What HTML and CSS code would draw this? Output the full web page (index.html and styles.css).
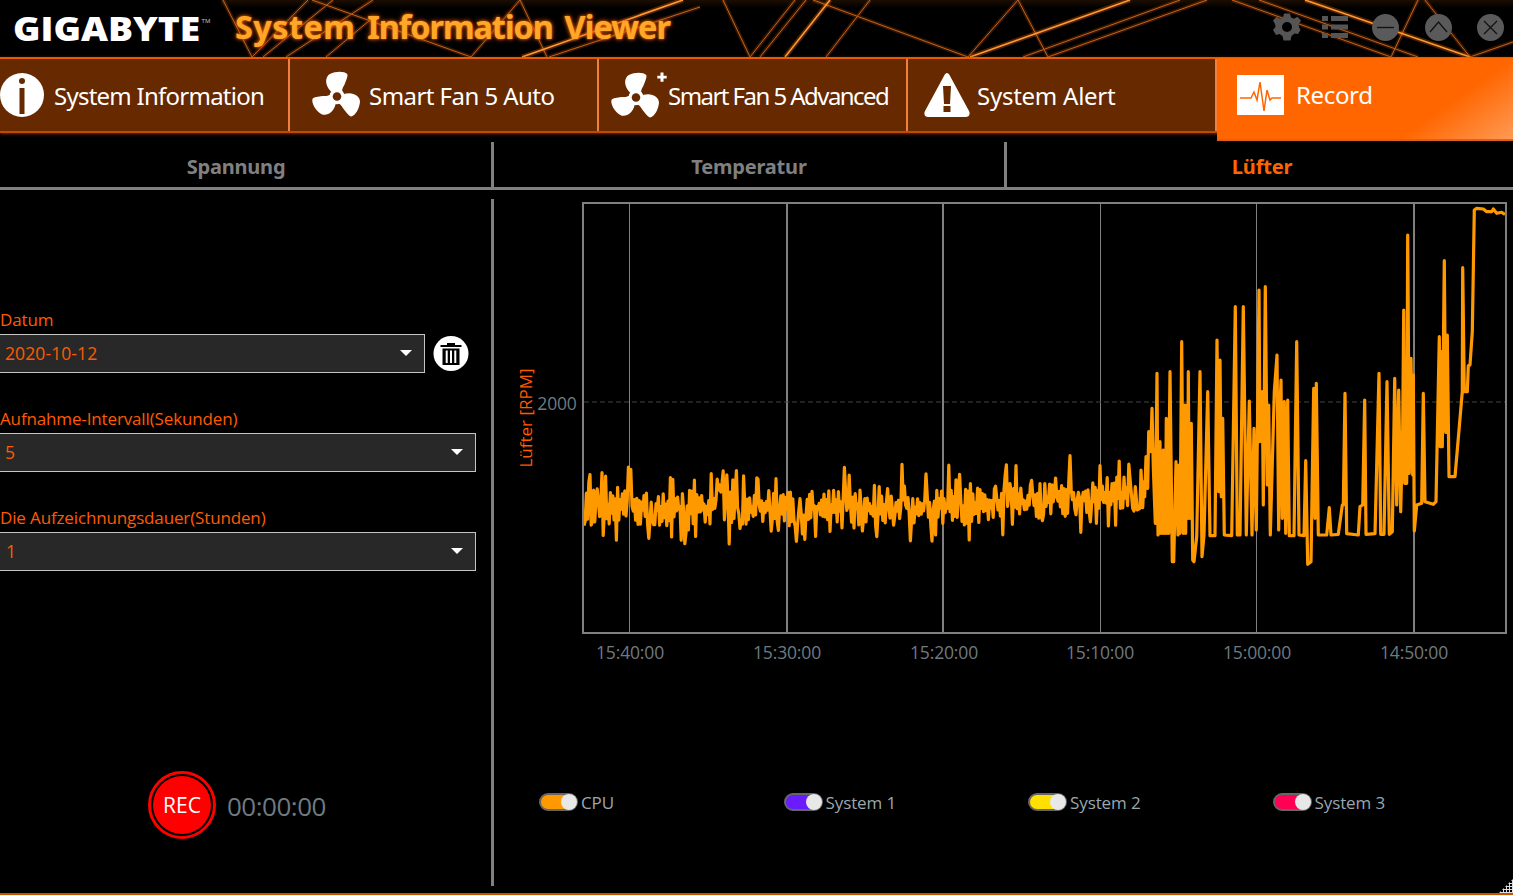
FILE: index.html
```html
<!DOCTYPE html>
<html lang="de">
<head>
<meta charset="utf-8">
<title>GIGABYTE System Information Viewer</title>
<link rel="stylesheet" href="styles.css">
</head>
<body>
<svg class="defs" width="0" height="0" aria-hidden="true">
  <defs>
    <g id="fan" transform="translate(0 .5) scale(1.02)">
      <path id="blade" d="M-6,-5 C-12,-11 -12,-19 -7,-22 C-1,-25 7,-25 10,-22 C11,-20 9,-16 7.500,-12 C6,-9 5,-8 5,-5 Z"/>
      <use href="#blade" transform="rotate(120)"/>
      <use href="#blade" transform="rotate(240)"/>
      <circle r="7.5"/>
      <circle r="4.2" fill="#662900"/>
    </g>
  </defs>
</svg>
<div class="app">
  <header class="titlebar">
    <svg class="pattern" width="1513" height="57" viewBox="0 0 1513 57" aria-hidden="true">
      <g class="glow">
        <path d="M223 0L252 57L308 0M263 57L333 0M286 57L373 0M326 57L370 20M312 0L471 57L520 0L547 57M549 57L700 7M723 0L750 57L795 0M760 57L806 0M826 57L870 0M813 0L968 57L1018 0L1048 57M1023 57L1180 0M1048 57L1207 0M1232 0L1391 57L1418 0M1259 0L1418 57M1425 0L1470 57L1513 42"/>
        <path class="bright" d="M522 57L683 0M640 15L683 0M785 57L830 0M970 57L1130 0M1305 0L1470 57"/>
      </g>
      <g class="line">
        <path d="M223 0L252 57L308 0M263 57L333 0M286 57L373 0M326 57L370 20M312 0L471 57L520 0L547 57M549 57L700 7M723 0L750 57L795 0M760 57L806 0M826 57L870 0M813 0L968 57L1018 0L1048 57M1023 57L1180 0M1048 57L1207 0M1232 0L1391 57L1418 0M1259 0L1418 57M1425 0L1470 57L1513 42"/>
        <path class="bright" d="M522 57L683 0M640 15L683 0M785 57L830 0M970 57L1130 0M1305 0L1470 57"/>
      </g>
    </svg>
    <div class="brand"><span class="logo">GIGABYTE</span><span class="tm">TM</span></div>
    <h1 class="title">System <span class="w-info">Information</span> <span class="w-view">Viewer</span></h1>
    <div class="winctl">
      <svg class="ctl-gear" width="28" height="28" viewBox="-14 -14 28 28" aria-hidden="true">
        <path d="M-3-13.5H3L4-9.5 7-8.2 10.5-10.3 14-6.2 11.5-3 12-0 13.5 3 11 7 7.5 6.5 4.5 9 3.5 13.5H-3.5L-4.5 9-7.5 7-11 8-14 3-11.5 0-12-3-14-6.5-10.5-10.3-7-8.2-4-9.5Z"/>
        <circle r="5" fill="#000"/>
      </svg>
      <svg class="ctl-list" width="26" height="24" viewBox="0 0 26 24" aria-hidden="true">
        <rect x="0" y="1" width="6" height="5"/><rect x="9" y="1" width="17" height="5"/>
        <rect x="0" y="9.5" width="6" height="5"/><rect x="9" y="9.5" width="17" height="5"/>
        <rect x="0" y="18" width="6" height="5"/><rect x="9" y="18" width="17" height="5"/>
      </svg>
      <svg class="ctl-round" width="27" height="27" viewBox="0 0 27 27" aria-hidden="true"><circle cx="13.5" cy="13.5" r="13.5"/><path d="M5 13.5H22"/></svg>
      <svg class="ctl-round" width="27" height="27" viewBox="0 0 27 27" aria-hidden="true"><circle cx="13.5" cy="13.5" r="13.5"/><path d="M5 18L13.5 8L22 18"/></svg>
      <svg class="ctl-round" width="27" height="27" viewBox="0 0 27 27" aria-hidden="true"><circle cx="13.5" cy="13.5" r="13.5"/><path d="M7 7L20 20M20 7L7 20"/></svg>
    </div>
  </header>

  <nav class="mainnav">
    <a class="navtab navtab-info">
      <svg class="nav-icon" width="44" height="44" viewBox="0 0 44 44" aria-hidden="true">
        <circle class="w" cx="22" cy="22" r="22"/><circle class="b" cx="22" cy="8" r="3"/><rect class="b" x="19.5" y="15" width="5" height="26"/>
      </svg>
      <span>System Information</span>
    </a>
    <a class="navtab navtab-auto">
      <svg class="nav-icon" width="48" height="48" viewBox="-24 -25 48 48" aria-hidden="true"><use class="w" href="#fan"/></svg>
      <span>Smart Fan 5 Auto</span>
    </a>
    <a class="navtab navtab-adv">
      <svg class="nav-icon" width="54" height="50" viewBox="-24 -27 54 50" aria-hidden="true">
        <use class="w" href="#fan"/><path class="w" d="M24.5-24.500h3v3.200h3.200v2.800h-3.200v3.200h-3v-3.200h-3.200v-2.800h3.200Z"/>
      </svg>
      <span>Smart Fan 5 Advanced</span>
    </a>
    <a class="navtab navtab-alert">
      <svg class="nav-icon" width="46" height="44" viewBox="0 0 46 44" aria-hidden="true">
        <path class="w" d="M23 0C24 0 25 1 25.500 2L45 38C46.500 41 45 44 42 44H4C1 44 -.5 41 1 38L20.500 2C21 1 22 0 23 0Z"/>
        <path class="b" d="M19 13H27L26 31H20ZM19.500 33H26.500V39H19.500Z"/>
      </svg>
      <span>System Alert</span>
    </a>
    <a class="navtab navtab-rec">
      <svg class="nav-icon" width="47" height="40" viewBox="0 0 47 40" aria-hidden="true">
        <rect class="w" width="47" height="40"/>
        <path class="pulse" d="M3 23H14L17 17L20 25L23 7L27 36L30 15L33 25L35 23H44"/>
      </svg>
      <span>Record</span>
    </a>
  </nav>

  <div class="subtabs">
    <div class="subtab subtab-first">Spannung</div>
    <div class="subtab">Temperatur</div>
    <div class="subtab subtab-on">Lüfter</div>
  </div>

  <main class="content">
    <section class="settings">
      <div class="field">
        <label class="field-label">Datum</label>
        <div class="field-row">
          <div class="select select-short"><span>2020-10-12</span><i class="caret"></i></div>
          <svg class="trash" width="36" height="36" viewBox="0 0.5 36 36" aria-hidden="true">
            <circle cx="18" cy="18" r="17.500"/>
            <path class="trash-k" d="M7.500 9.500H28.500V11.500H7.500ZM14 7.500H22V9.500H14ZM9.500 13H26.500V29.500H9.500Z"/>
            <path class="trash-w" d="M12.700 15V27.500H14.700V15ZM17 15V27.500H19V15ZM21.300 15V27.500H23.300V15Z"/>
          </svg>
        </div>
      </div>
      <div class="field">
        <label class="field-label">Aufnahme-Intervall(Sekunden)</label>
        <div class="select"><span>5</span><i class="caret"></i></div>
      </div>
      <div class="field">
        <label class="field-label">Die Aufzeichnungsdauer(Stunden)</label>
        <div class="select"><span class="val-one">1</span><i class="caret"></i></div>
      </div>
      <div class="recorder">
        <div class="rec-btn"><span>REC</span></div>
        <div class="rec-time">00:00:00</div>
      </div>
    </section>

    <section class="chart-pane">
      <svg class="chart" id="chart" width="1019" height="480" viewBox="494 190 1019 480" role="img" aria-label="Lüfter RPM">
        <path class="grid grid-thin" d="M629.500 203V633M1100.500 203V633M1256.500 203V633"/>
        <path class="grid grid-thick" d="M787 203V633M943 203V633M1414 203V633"/>
        <path class="dash" d="M584 402H1505"/>
        <polyline class="series" id="series" points=""/>
        <rect class="frame" x="583" y="203" width="923" height="430"/>
        <text class="tick" x="557" y="410" text-anchor="middle">2000</text>
        <text class="axis" transform="translate(532 418) rotate(-90)" text-anchor="middle">Lüfter [RPM]</text>
        <text class="tick" x="630" y="659" text-anchor="middle">15:40:00</text>
        <text class="tick" x="787" y="659" text-anchor="middle">15:30:00</text>
        <text class="tick" x="944" y="659" text-anchor="middle">15:20:00</text>
        <text class="tick" x="1100" y="659" text-anchor="middle">15:10:00</text>
        <text class="tick" x="1257" y="659" text-anchor="middle">15:00:00</text>
        <text class="tick" x="1414" y="659" text-anchor="middle">14:50:00</text>
      </svg>
      <div class="legend">
        <div class="legend-item"><span class="toggle t-cpu"></span><span>CPU</span></div>
        <div class="legend-item"><span class="toggle t-s1"></span><span>System 1</span></div>
        <div class="legend-item"><span class="toggle t-s2"></span><span>System 2</span></div>
        <div class="legend-item"><span class="toggle t-s3"></span><span>System 3</span></div>
      </div>
    </section>
  </main>

  <div class="grip" aria-hidden="true"></div>
</div>
<script src="chart.js"></script>
</body>
</html>
```

FILE: styles.css
```css
* { box-sizing: border-box; }
html, body { margin: 0; padding: 0; background: #000; }
body { width: 1513px; height: 895px; overflow: hidden; font-family: "Open Sans", "Liberation Sans", sans-serif; }
.defs { position: absolute; }
.app { position: relative; width: 1513px; height: 895px; background: #000; border-bottom: 2px solid #c85000; overflow: hidden; display: flex; flex-direction: column; }

/* title bar */
.titlebar { position: relative; height: 57px; flex: none; display: flex; align-items: center; background: linear-gradient(#1c0e00, #000 8px); }
.pattern { position: absolute; left: 0; top: 0; }
.glow path { fill: none; stroke: #ff6a00; stroke-width: 4; opacity: .2; }
.line path { fill: none; stroke: #c8641a; stroke-width: 1; }
.line .bright { stroke: #ff9a30; stroke-width: 1.6; }
.glow .bright { stroke-width: 5; opacity: .3; }
.brand { position: relative; width: 221px; height: 57px; flex: none; background: #000; display: flex; align-items: center; padding-left: 13px; }
.logo { display: block; font-family: "Open Sans", sans-serif; font-weight: 800; font-size: 33.500px; line-height: 57px; color: #fff; transform: scaleX(1.11); transform-origin: 0 50%; }
.tm { font-size: 6px; color: #ccc; align-self: flex-start; margin-top: 17px; margin-left: 20px; }
.title { position: relative; margin: 0 0 0 14px; padding-bottom: 4px; font-family: "Noto Sans", sans-serif; font-weight: 700; font-size: 32.500px; letter-spacing: .4px; line-height: 53px; color: #ffa726; text-shadow: 0 0 5px #e85c00, 0 0 2px #e85c00; white-space: nowrap; word-spacing: 3px; }
.w-info { letter-spacing: -1.100px; }
.w-view { letter-spacing: -1px; }
.winctl { position: absolute; left: 1273px; top: 13px; display: flex; align-items: center; }
.ctl-gear { fill: #555; margin-right: 21px; }
.ctl-list { fill: #555; margin-right: 24px; }
.ctl-round { margin-right: 25.500px; }
.ctl-round circle { fill: #5a5a5a; }
.ctl-round path { fill: none; stroke: #111; stroke-width: 1.300; }

/* main nav */
.mainnav { position: relative; height: 76px; flex: none; display: flex; background: #662900; border-top: 2px solid #e85c00; border-bottom: 2px solid #c04a00; box-shadow: 0 1px 3px #7a2c00; }
.navtab { height: 72px; display: flex; align-items: center; color: #fff; font-family: "Noto Sans", sans-serif; font-size: 24px; letter-spacing: -.25px; white-space: nowrap; border-right: 2px solid #f08040; }
.navtab .w { fill: #fff; }
.navtab .b { fill: #662900; }
.nav-icon { flex: none; overflow: visible; }
.navtab-info { width: 290px; gap: 10px; letter-spacing: -.75px; }
.navtab-auto { width: 309px; padding-left: 23px; gap: 8px; letter-spacing: -.55px; }
.navtab-adv { width: 309px; padding-left: 13px; gap: 2px; letter-spacing: -1.550px; }
.navtab-alert { width: 309px; padding-left: 16px; gap: 7px; }
.navtab-rec { flex: 1; margin-bottom: -8px; height: 83px; margin-top: -1px; padding: 0 0 8px 20px; gap: 12px; border-right: 0; background: linear-gradient(145deg, #ff6600 72%, #ff9a55 100%); border-bottom: 2px solid #e06020; letter-spacing: -.35px; }
.pulse { fill: none; stroke: #ff6600; stroke-width: 1.500; }

/* sub tabs */
.subtabs { display: grid; grid-template-columns: 494px 513px 1fr; height: 57px; padding-top: 9px; flex: none; border-bottom: 3px solid #808080; }
.subtab { display: flex; align-items: center; justify-content: center; padding-top: 4px; font-family: "Noto Sans", sans-serif; font-weight: 700; font-size: 20px; letter-spacing: -.2px; color: #808080; border-right: 3px solid #808080; }
.subtab-first { padding-right: 19px; }
.subtab-on { color: #ff6600; border-right: 0; padding-left: 4px; }

/* content */
.content { flex: 1; display: flex; min-height: 0; }
.settings { position: relative; width: 496px; margin-left: -2px; flex: none; display: flex; flex-direction: column; padding-top: 120px; }
.settings::after { content: ""; position: absolute; right: 0; top: 9px; width: 3px; height: 687px; background: #808080; }
.field { display: flex; flex-direction: column; margin-bottom: 36px; }
.field-label { height: 20px; line-height: 20px; margin-bottom: 4px; padding-left: 2px; font-size: 17px; color: #ff5a00; white-space: nowrap; letter-spacing: -.14px; }
.field-row { display: flex; align-items: center; gap: 8px; }
.select { width: 478px; height: 39px; display: flex; align-items: center; justify-content: space-between; padding: 0 12px 2px 6px; background: #282828; border: 1px solid #c4c4c4; color: #ff5a00; font-size: 17.500px; letter-spacing: .1px; }
.select-short { width: 427px; }
.val-one { padding-left: 1px; }
.caret { width: 0; height: 0; border-left: 6px solid transparent; border-right: 6px solid transparent; border-top: 6px solid #fff; }
.trash { flex: none; }
.trash circle { fill: #fff; }
.trash-k { fill: #000; }
.trash-w { fill: #fff; }
.recorder { display: flex; align-items: center; margin-top: 164px; padding-left: 150px; gap: 11px; }
.rec-btn { width: 68px; height: 68px; border-radius: 50%; border: 3px solid #ff0000; padding: 2px; background: #000; display: flex; }
.rec-btn span { flex: 1; border-radius: 50%; background: #ff0000; color: #fff; font-size: 21px; display: flex; align-items: center; justify-content: center; }
.rec-time { font-size: 26px; color: #6f7a80; letter-spacing: -.5px; padding-top: 2px; }

.chart-pane { flex: 1; display: flex; flex-direction: column; min-width: 0; }
.chart { display: block; flex: none; }
.grid { fill: none; stroke: #808080; }
.grid-thin { stroke-width: 1; }
.grid-thick { stroke-width: 2; }
.dash { fill: none; stroke: #444; stroke-width: 1; stroke-dasharray: 5 3; }
.series { fill: none; stroke: #ff9900; stroke-width: 3.200; stroke-linejoin: round; }
.frame { fill: none; stroke: #808080; stroke-width: 2; }
.tick { fill: #6f7a80; font-family: "Open Sans", sans-serif; font-size: 17.500px; letter-spacing: -.15px; }
.axis { fill: #ff5a00; font-family: "Open Sans", sans-serif; font-size: 17px; }
.legend { display: flex; padding: 122px 0 0 45px; }
.legend-item { width: 244.500px; flex: none; display: flex; align-items: center; gap: 3px; color: #9aa7ae; font-size: 17px; letter-spacing: -.1px; height: 20px; }
.toggle { position: relative; width: 39px; height: 18px; flex: none; border: 2px solid #666; border-radius: 9px; }
.toggle::after { content: ""; position: absolute; right: -1px; top: -1px; width: 16px; height: 16px; border-radius: 50%; background: #e8e8e8; }
.t-cpu { background: #ff9900; }
.t-s1 { background: #6a1bff; }
.t-s2 { background: #ffe000; }
.t-s3 { background: #ff0055; }
.grip { position: absolute; right: 0; bottom: 0; width: 14px; height: 14px; background: radial-gradient(circle, #ddd 1px, transparent 1.200px) 0 0 / 3px 3px; clip-path: polygon(100% 0, 100% 100%, 0 100%); }
```

FILE: chart.js
```js
(function () {
  var spikes = [[0,850],[8,940],[12,948],[16,875],[22,945],[30,940],[33,825],[38,938],[42,860],[44,905],[48,785],[53,880],[56,710],[62,770],[66,640],[70,815],[76,985],[81,535],[84,1020],[86,780],[88,1015],[90,740],[92,1015],[94,770],[96,1015],[98,790],[100,765],[102,1015],[104,800],[106,1015],[109,670],[112,1015],[114,800],[116,1015],[118,720],[120,530],[127,1100],[131,1100],[138,800],[144,1020],[147,810],[150,1015],[155,440],[160,1015],[164,630],[167,1015],[170,630],[173,970],[175,530],[178,970],[180,700],[182,970],[184,685],[188,1095],[192,1100],[200,1025],[210,530],[216,1085],[222,1020],[233,590],[240,1022],[255,1022],[261,435],[266,890],[270,495],[274,905],[278,670],[283,1020],[305,1022],[316,335],[322,1020],[330,1020],[340,335],[349,1020],[358,618],[366,1020],[372,700],[379,1005],[387,285],[390,740],[394,700],[397,590],[400,930],[406,275],[412,870],[416,630],[421,1020],[433,590],[441,480],[446,1005],[450,640],[453,555],[457,970],[460,640],[463,620],[467,1015],[473,615],[478,1022],[492,1022],[500,440],[507,1020],[522,1022],[527,797],[533,1108],[543,1100],[551,580],[555,970],[559,565],[565,1020],[590,1020],[598,938],[603,1020],[625,1018],[637,930],[640,930],[645,595],[650,1016],[685,1020],[690,935],[698,930],[704,615],[708,1018],[735,1016],[747,535],[752,1018],[762,1018],[771,560],[778,1018],[787,1010],[794,550],[800,930],[806,585],[812,950],[818,700],[821,345],[824,865],[827,500],[830,865],[833,120],[838,835],[843,490],[848,840],[850,540],[853,1008],[860,930],[875,925],[880,595],[885,920],[910,928],[918,920],[928,425],[931,755],[934,470],[937,755],[943,197],[947,712],[952,420],[957,845],[975,845],[997,590],[998,218],[1003,590],[1012,590],[1015,512],[1020,510],[1027,410],[1033,45],[1040,40],[1060,42],[1070,50],[1085,50],[1090,42],[1100,55],[1115,52],[1125,58]];
  var seed = 20201012;
  function rnd() { seed = (seed * 1664525 + 1013904223) >>> 0; return seed / 4294967296; }
  var pts = [];
  var sign = 1;
  for (var x = 584; x < 1130; x += 1.2) {
    var base = 508 - Math.max(0, x - 950) * 0.085;
    var r = rnd(), d;
    sign = -sign;
    if (r < 0.12) d = -18 - rnd() * 26;
    else if (r < 0.22) d = 15 + rnd() * 21;
    else d = sign * rnd() * 18;
    pts.push(x.toFixed(1) + "," + (base + d).toFixed(1));
  }
  spikes.forEach(function (p) {
    pts.push((1130 + p[0] / 3).toFixed(1) + "," + (195 + p[1] / 3).toFixed(1));
  });
  document.getElementById("series").setAttribute("points", pts.join(" "));
})();
```
